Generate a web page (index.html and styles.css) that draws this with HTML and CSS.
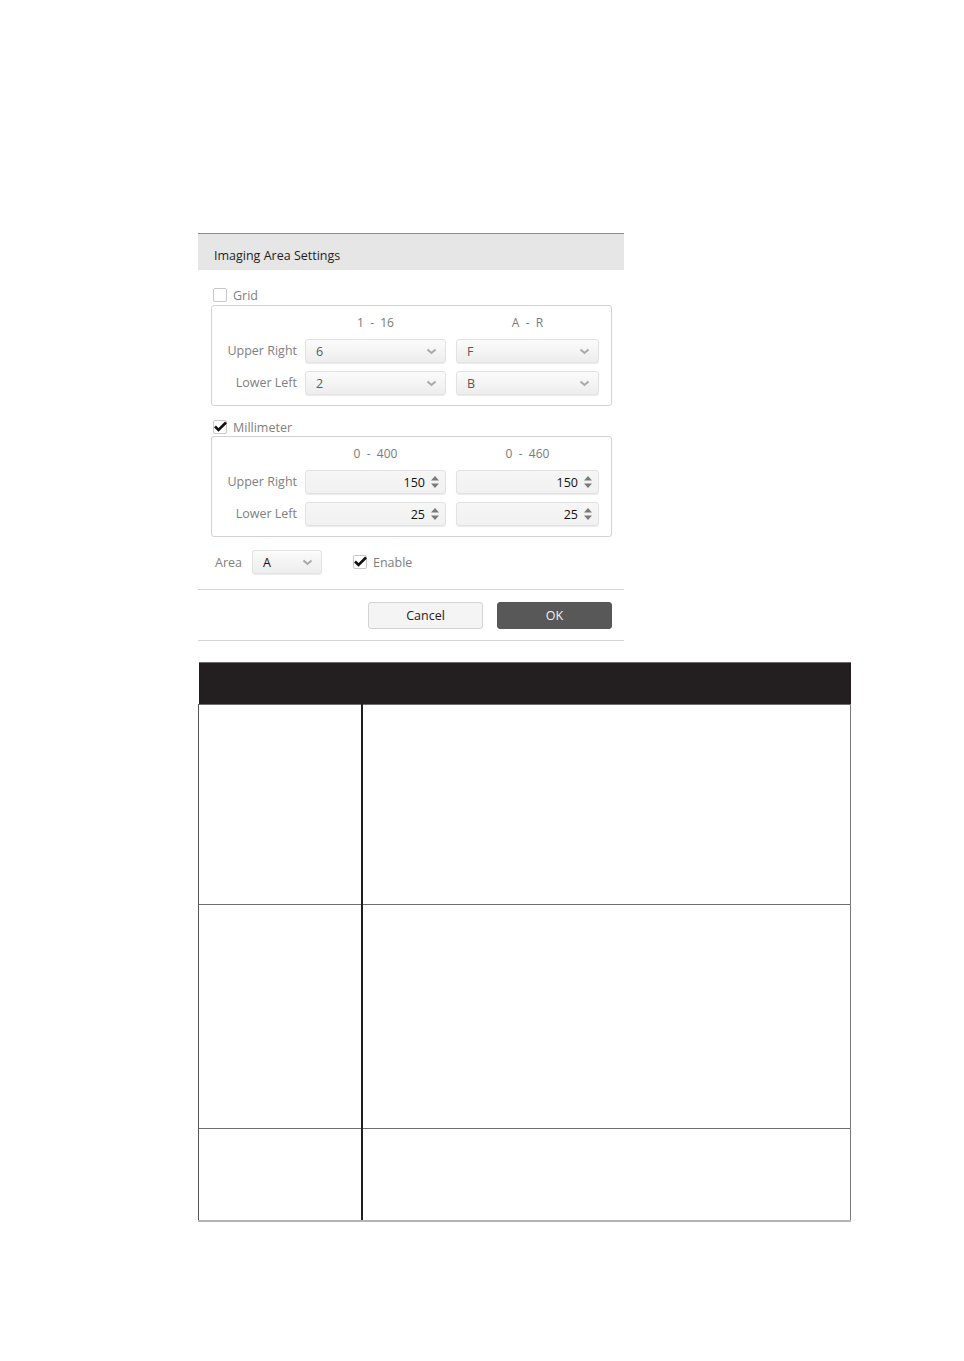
FILE: index.html
```html
<!DOCTYPE html>
<html>
<head>
    <meta charset="utf-8">
    <link rel="stylesheet" href="styles.css">
</head>
<body>

    <div class="dialog">
        <div class="dialog-title">Imaging Area Settings</div>

        <div class="dialog-body">
            <label class="check-row">
                <span class="check"></span>
                <span class="check-text">Grid</span>
            </label>
            <div class="range-box">
                <div class="range-grid">
                    <div></div>
                    <div class="range-head">1&nbsp; - &nbsp;16</div>
                    <div class="range-head">A&nbsp; - &nbsp;R</div>

                    <div class="range-label">Upper Right</div>
                    <div class="select"><span>6</span><svg class="chev" width="11" height="7" viewBox="0 0 11 7"><polyline points="1.5,1.5 5.5,5 9.5,1.5"/></svg></div>
                    <div class="select"><span>F</span><svg class="chev" width="11" height="7" viewBox="0 0 11 7"><polyline points="1.5,1.5 5.5,5 9.5,1.5"/></svg></div>

                    <div class="range-label">Lower Left</div>
                    <div class="select"><span>2</span><svg class="chev" width="11" height="7" viewBox="0 0 11 7"><polyline points="1.5,1.5 5.5,5 9.5,1.5"/></svg></div>
                    <div class="select"><span>B</span><svg class="chev" width="11" height="7" viewBox="0 0 11 7"><polyline points="1.5,1.5 5.5,5 9.5,1.5"/></svg></div>
                </div>
            </div>

            <label class="check-row check-row-mm">
                <span class="check checked"><svg width="13" height="11" viewBox="0 0 13 11"><path d="M1 5.5 L4.5 9 L12 1.5"/></svg></span>
                <span class="check-text">Millimeter</span>
            </label>
            <div class="range-box">
                <div class="range-grid">
                    <div></div>
                    <div class="range-head">0&nbsp; - &nbsp;400</div>
                    <div class="range-head">0&nbsp; - &nbsp;460</div>

                    <div class="range-label">Upper Right</div>
                    <div class="spin"><span>150</span><svg class="spin-arrows" width="8" height="12" viewBox="0 0 8 12"><path d="M4 0 L8 4.5 L0 4.5 Z M0 7.5 L8 7.5 L4 12 Z"/></svg></div>
                    <div class="spin"><span>150</span><svg class="spin-arrows" width="8" height="12" viewBox="0 0 8 12"><path d="M4 0 L8 4.5 L0 4.5 Z M0 7.5 L8 7.5 L4 12 Z"/></svg></div>

                    <div class="range-label">Lower Left</div>
                    <div class="spin"><span>25</span><svg class="spin-arrows" width="8" height="12" viewBox="0 0 8 12"><path d="M4 0 L8 4.5 L0 4.5 Z M0 7.5 L8 7.5 L4 12 Z"/></svg></div>
                    <div class="spin"><span>25</span><svg class="spin-arrows" width="8" height="12" viewBox="0 0 8 12"><path d="M4 0 L8 4.5 L0 4.5 Z M0 7.5 L8 7.5 L4 12 Z"/></svg></div>
                </div>
            </div>

            <div class="area-row">
                <span class="area-label">Area</span>
                <div class="select select-area"><span>A</span><svg class="chev" width="11" height="7" viewBox="0 0 11 7"><polyline points="1.5,1.5 5.5,5 9.5,1.5"/></svg></div>
                <label class="check-row check-row-inline">
                    <span class="check checked"><svg width="13" height="11" viewBox="0 0 13 11"><path d="M1 5.5 L4.5 9 L12 1.5"/></svg></span>
                    <span class="check-text">Enable</span>
                </label>
            </div>
        </div>

        <div class="dialog-footer">
            <button class="btn">Cancel</button>
            <button class="btn btn-ok">OK</button>
        </div>
    </div>

    <table class="spec">
        <thead>
            <tr><th colspan="2"></th></tr>
        </thead>
        <tbody>
            <tr class="row-a"><td class="col-name"></td><td></td></tr>
            <tr class="row-b"><td class="col-name"></td><td></td></tr>
            <tr class="row-c"><td class="col-name"></td><td></td></tr>
        </tbody>
    </table>

</body>
</html>
```

FILE: styles.css
```css
html,
body {
    margin: 0;
    background: #ffffff;
    font-family: "Open Sans", "Noto Sans", sans-serif;
}

body {
    padding-top: 233px;
}

.dialog {
    width: 426px;
    margin-left: 198px;
    border-bottom: 1px solid #d4d4d4;
}

.dialog-title {
    height: 36px;
    line-height: 43px;
    border-top: 1px solid #8a8a8a;
    background: #e6e6e6;
    padding-left: 16px;
    font-size: 12.5px;
    color: #1e1e1e;
}

.dialog-body {
    padding: 17px 12px 15px 13px;
    border-bottom: 1px solid #d6d6d6;
}

.check-row {
    display: flex;
    align-items: center;
    height: 16px;
    margin-bottom: 2px;
    padding-left: 2px;
}

.check-row-mm {
    margin-top: 13px;
    margin-bottom: 1px;
}

.check {
    width: 12px;
    height: 12px;
    border: 1px solid #c8c8c8;
    border-radius: 2px;
    background: #fff;
    position: relative;
}

.check.checked svg {
    position: absolute;
    left: 0;
    top: 0;
    fill: none;
    stroke: #111;
    stroke-width: 2.6;
}

.check-text {
    margin-left: 6px;
    font-size: 12.5px;
    color: #808080;
}

.range-box {
    border: 1px solid #d2d2d2;
    border-radius: 3px;
    padding: 0 12px 10px 0;
}

.range-grid {
    display: grid;
    grid-template-columns: 93px 141px 153px;
    grid-template-rows: 25px 24px 24px;
    row-gap: 8px;
}

.range-grid > :nth-child(3n) {
    margin-left: 10px;
    width: 143px;
}

.range-head {
    padding-top: 9px;
    text-align: center;
    font-size: 12px;
    line-height: 16px;
    color: #7a7a7a;
}

.range-label {
    text-align: right;
    padding-right: 8px;
    font-size: 12.5px;
    line-height: 24px;
    color: #808080;
}

.select,
.spin {
    box-sizing: border-box;
    height: 24px;
    display: flex;
    align-items: center;
    border: 1px solid #e2e2e2;
    border-radius: 3px;
    background: linear-gradient(#fbfbfb, #ededed);
    box-shadow: 0 1px 1px rgba(0, 0, 0, 0.08);
    font-size: 12.5px;
    color: #5a5a5a;
}

.select {
    justify-content: space-between;
    padding: 0 8px 0 10px;
}

.chev {
    fill: none;
    stroke: #a8a8a8;
    stroke-width: 2;
}

.spin {
    justify-content: flex-end;
    padding-right: 6px;
    background: linear-gradient(#f6f6f6, #f1f1f1);
    color: #111;
}

.spin-arrows {
    margin-left: 6px;
    fill: #7a7a7a;
}

.area-row {
    display: flex;
    align-items: center;
    height: 24px;
    margin-top: 13px;
}

.area-label {
    margin-left: 4px;
    width: 37px;
    font-size: 12.5px;
    color: #808080;
}

.select-area {
    width: 70px;
    color: #111;
}

.check-row-inline {
    margin: 0 0 0 31px;
    padding-left: 0;
}

.dialog-footer {
    display: flex;
    justify-content: flex-end;
    gap: 14px;
    padding: 12px 12px 11px 0;
}

.btn {
    width: 115px;
    height: 27px;
    border: 1px solid #d4d4d4;
    border-radius: 3px;
    background: #f4f4f4;
    font-family: "Open Sans", "Noto Sans", sans-serif;
    font-size: 12.5px;
    color: #222;
    padding: 0;
}

.btn-ok {
    background: #585858;
    border-color: #555;
    color: #f2f2f2;
}

.spec {
    margin: 21px 0 0 198px;
    width: 653px;
    border-collapse: collapse;
}

.spec th {
    height: 41px;
    background: #231f20;
    border-top: 1px solid #6b6b6b;
    padding: 0;
}

.spec td {
    padding: 0;
    border-top: 1px solid #6e6e6e;
    border-left: 1.5px solid #231f20;
    border-right: 1px solid #7a7a7a;
}

.spec td.col-name {
    width: 162px;
    border-left: 1px solid #555;
    border-right: 2px solid #231f20;
}

.spec tbody tr:last-child td {
    border-bottom: 2px solid #b4b4b4;
}

.row-a td {
    height: 199px;
}

.row-b td {
    height: 223px;
}

.row-c td {
    height: 91px;
}
```
